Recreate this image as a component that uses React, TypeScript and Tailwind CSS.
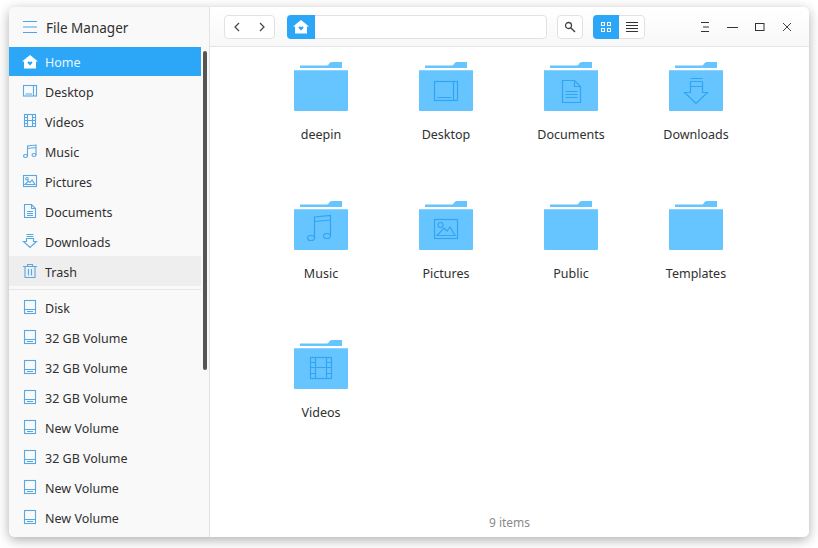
import React from "react";

const FONT = "font-['Noto_Sans','Open_Sans',sans-serif]";

type IconName = "home" | "desktop" | "videos" | "music" | "pictures" | "documents" | "downloads" | "trash" | "disk";

function Glyph({ name, color }: { name: IconName; color: string }) {
  const s = { fill: "none", stroke: color, strokeWidth: 1.1 };
  switch (name) {
    case "home":
      return (
        <>
          <path d="M8 1 L16 7.500 L14 7.500 L14 14.500 L2 14.500 L2 7.500 L0 7.500 Z" fill={color} />
          <path d="M8 11.500 L5.600 9 C5.200 7.600 7.200 7 8 8.200 C8.800 7 10.800 7.600 10.400 9 Z" fill="#2ca7f8" />
        </>
      );
    case "desktop":
      return (
        <>
          <rect x="1.500" y="2.500" width="13" height="10.500" {...s} />
          <path d="M11.500 2.500 V13 M3.500 11 H10" {...s} />
        </>
      );
    case "videos":
      return (
        <>
          <rect x="2.500" y="1.500" width="11" height="12" {...s} />
          <path d="M5.500 1.500 V13.500 M10.500 1.500 V13.500 M2.500 4.500 H5.500 M2.500 7.500 H13.500 M2.500 10.500 H5.500 M10.500 4.500 H13.500 M10.500 10.500 H13.500" {...s} />
        </>
      );
    case "music":
      return (
        <>
          <ellipse cx="3.500" cy="13" rx="2" ry="1.500" {...s} />
          <ellipse cx="12" cy="12" rx="2" ry="1.500" {...s} />
          <path d="M5.500 13 V3 L14 2 V12 M5.500 5.500 L14 4.500" {...s} />
        </>
      );
    case "pictures":
      return (
        <>
          <rect x="1.500" y="2.500" width="13" height="11" {...s} />
          <circle cx="5" cy="5.800" r="1.300" {...s} />
          <path d="M3 11.500 L6.500 8 L8 9.500 L10 7 L13 11.500 Z" {...s} />
        </>
      );
    case "documents":
      return (
        <>
          <path d="M2.500 1.500 H9.500 L13.500 5.500 V14.500 H2.500 Z M9.500 1.500 V5.500 H13.500" {...s} />
          <path d="M5 8.500 H11 M5 10.500 H11 M5 12.500 H11" {...s} />
        </>
      );
    case "downloads":
      return <path d="M4.500 1.500 H11.500 M4.500 3.500 H11.500 M4.500 5.500 H11.500 V8.500 H14.500 L8 14.500 L1.500 8.500 H4.500 Z" {...s} />;
    case "trash":
      return <path d="M1 3.500 H15 M5.500 3.500 V1.500 H10.500 V3.500 M3 3.500 V14.500 H13 V3.500 M6.500 6 V12.500 M9.500 6 V12.500" {...s} />;
    case "disk":
      return (
        <>
          <rect x="2.500" y="1.500" width="11" height="13" {...s} />
          <path d="M2.500 10.500 H13.500 M5 12.500 H11" {...s} />
        </>
      );
  }
}

function SideIcon({ name, color = "#58a9e3" }: { name: IconName; color?: string }) {
  return (
    <svg width="16" height="16" viewBox="0 0 16 16" className="shrink-0">
      <Glyph name={name} color={color} />
    </svg>
  );
}

function SideRow({ icon, label, tone = "plain" }: { icon: IconName; label: string; tone?: "plain" | "active" | "hover" }) {
  const toneClass =
    tone === "active"
      ? "h-[29px] bg-[#2ca7f8] text-[#e8f5ff]"
      : tone === "hover"
        ? "h-[30px] bg-[#eeeeee] text-[#303030]"
        : "h-[30px] text-[#303030]";
  return (
    <div className={`flex w-[192px] shrink-0 items-center gap-[7px] pl-[13px] text-[12.5px] ${toneClass}`}>
      <SideIcon name={icon} color={tone === "active" ? "#ffffff" : "#58a9e3"} />
      <span className="pt-[4px]">{label}</span>
    </div>
  );
}

function FolderArt({ kind }: { kind?: string }) {
  const c = "#32a4f4";
  const s = { fill: "none", stroke: c, strokeWidth: 1.2 };
  return (
    <svg width="54" height="49" viewBox="0 0 54 49" className="block">
      <path d="M6 6 V3.500 H33 C35 3.500 35 0 38 0 H48 V6 Z" fill="#66c4fe" />
      <rect x="0" y="8" width="54" height="41" rx="1" fill="#66c4fe" />
      <path d="M0 8.500 H54" stroke="#8ad2ff" strokeWidth="1" />
      {kind === "Desktop" && (
        <g {...s}>
          <rect x="15.500" y="19.500" width="23" height="19" />
          <path d="M34.500 19.500 V38.500 M18 35.500 H32" />
        </g>
      )}
      {kind === "Documents" && (
        <g {...s}>
          <path d="M18.500 18.500 H30.500 L36.500 24.500 V40.500 H18.500 Z M30.500 18.500 V24.500 H36.500" />
          <path d="M21.500 29.500 H33.500 M21.500 32.500 H33.500 M21.500 35.500 H33.500" />
        </g>
      )}
      {kind === "Downloads" && (
        <g {...s}>
          <path d="M21.500 16.500 H33.500 M21.500 19.500 H33.500 M21.500 24.500 H33.500 V19.500 M21.500 19.500 V30.500 H15.500 L27 41.500 L38.500 30.500 H33.500 V24.500" />
        </g>
      )}
      {kind === "Music" && (
        <g {...s}>
          <ellipse cx="17" cy="37" rx="3.500" ry="2.500" />
          <ellipse cx="33" cy="35" rx="3.500" ry="2.500" />
          <path d="M20.500 37 V16 L36.500 14.500 V35 M20.500 20.500 L36.500 19" />
        </g>
      )}
      {kind === "Pictures" && (
        <g {...s}>
          <rect x="15.500" y="18.500" width="23" height="19" />
          <circle cx="21.500" cy="24" r="2.500" />
          <path d="M18 34.500 L25 27 L28 30 L31 26 L36 34.500 Z" />
        </g>
      )}
      {kind === "Videos" && (
        <g {...s}>
          <rect x="16.500" y="17.500" width="21" height="21" />
          <path d="M21.500 17.500 V38.500 M32.500 17.500 V38.500 M16.500 22.500 H21.500 M16.500 27.500 H37.500 M16.500 33.500 H21.500 M32.500 22.500 H37.500 M32.500 33.500 H37.500" />
        </g>
      )}
    </svg>
  );
}

function FolderItem({ name }: { name: string }) {
  return (
    <div className="flex h-[139px] w-[125px] flex-col items-center pt-[15px]">
      <FolderArt kind={name} />
      <div className="mt-[15px] pl-px text-[12.5px] leading-[18px] text-[#303030]">{name}</div>
    </div>
  );
}

const places: [IconName, string][] = [
  ["desktop", "Desktop"],
  ["videos", "Videos"],
  ["music", "Music"],
  ["pictures", "Pictures"],
  ["documents", "Documents"],
  ["downloads", "Downloads"],
];
const disks = ["Disk", "32 GB Volume", "32 GB Volume", "32 GB Volume", "New Volume", "32 GB Volume", "New Volume", "New Volume"];
const folders = ["deepin", "Desktop", "Documents", "Downloads", "Music", "Pictures", "Public", "Templates", "Videos"];

export default function App() {
  return (
    <div className={`h-[548px] w-[818px] overflow-hidden bg-white pl-[9px] pt-[7px] ${FONT}`}>
      <div className="flex h-[530px] w-[800px] overflow-hidden rounded-[6px] bg-white shadow-[0_3px_12px_rgba(0,0,0,0.32)]">
        <aside className="relative flex w-[201px] shrink-0 flex-col border-r border-[#e4e4e4] bg-[#f9f9f9]">
          <div className="flex h-[40px] shrink-0 items-center gap-[9px] pl-[14px] text-[13.5px] text-[#303030]">
            <svg width="14" height="12" viewBox="0 0 14 12">
              <path d="M0 .5 H14 M0 6 H14 M0 11.500 H14" stroke="#4ea6e6" strokeWidth="1" fill="none" />
            </svg>
            <span className="pt-[2px]">File Manager</span>
          </div>
          <SideRow icon="home" label="Home" tone="active" />
          {places.map(([i, l]) => (
            <SideRow key={l} icon={i} label={l} />
          ))}
          <SideRow icon="trash" label="Trash" tone="hover" />
          <div className="mb-[2px] mt-[3px] h-px w-[192px] shrink-0 bg-[#e6e6e6]" />
          {disks.map((d, i) => (
            <SideRow key={i} icon="disk" label={d} />
          ))}
          <div className="absolute left-[194px] top-[44px] h-[319px] w-[4px] rounded-[2px] bg-[#555555]" />
        </aside>
        <main className="flex min-w-0 flex-1 flex-col">
          <header className="flex h-[40px] shrink-0 items-center border-b border-[#e4e4e4] bg-gradient-to-b from-white to-[#f8f8f8] pl-[14px]">
            <div className="flex h-[24px] w-[51px] items-center justify-between rounded-[4px] border border-[#e2e2e2] bg-white px-[7px]">
              <svg width="10" height="10" viewBox="0 0 10 10"><path d="M7 1 L3 5 L7 9" stroke="#444" strokeWidth="1.200" fill="none" /></svg>
              <svg width="10" height="10" viewBox="0 0 10 10"><path d="M3 1 L7 5 L3 9" stroke="#444" strokeWidth="1.200" fill="none" /></svg>
            </div>
            <div className="ml-[12px] flex h-[24px] w-[260px] overflow-hidden rounded-[4px] bg-white">
              <div className="flex h-full w-[28px] shrink-0 items-center justify-center bg-[#2ca7f8]">
                <svg width="16" height="16" viewBox="0 0 16 16"><Glyph name="home" color="#ffffff" /></svg>
              </div>
              <div className="flex-1 rounded-r-[4px] border-y border-r border-[#e2e2e2]" />
            </div>
            <div className="ml-[10px] flex h-[24px] w-[26px] items-center justify-center rounded-[4px] border border-[#e2e2e2] bg-white">
              <svg width="12" height="12" viewBox="0 0 12 12">
                <circle cx="4.500" cy="4.500" r="3" stroke="#444" strokeWidth="1.300" fill="none" />
                <path d="M7 7 L11 11" stroke="#444" strokeWidth="1.500" />
              </svg>
            </div>
            <div className="ml-[10px] flex h-[24px] w-[52px] overflow-hidden rounded-[4px] bg-white">
              <div className="flex h-full w-[26px] shrink-0 items-center justify-center bg-[#2ca7f8]">
                <svg width="10" height="10" viewBox="0 0 10 10" fill="none" stroke="#fff" strokeWidth="1">
                  <rect x=".5" y=".5" width="3" height="3" />
                  <rect x="6.500" y=".5" width="3" height="3" />
                  <rect x=".5" y="6.500" width="3" height="3" />
                  <rect x="6.500" y="6.500" width="3" height="3" />
                </svg>
              </div>
              <div className="flex flex-1 items-center justify-center rounded-r-[4px] border-y border-r border-[#e2e2e2]">
                <svg width="12" height="10" viewBox="0 0 12 10"><path d="M0 .5 H12 M0 3.500 H12 M0 6.500 H12 M0 9.500 H12" stroke="#333" strokeWidth="1" /></svg>
              </div>
            </div>
            <div className="ml-[55px] flex items-center gap-[17px]">
              <svg width="10" height="10" viewBox="0 0 10 10"><path d="M1 .5 H9 M3 5 H9 M1 9.500 H9" stroke="#333" strokeWidth="1" /></svg>
              <svg width="11" height="10" viewBox="0 0 11 10"><path d="M0 5.500 H11" stroke="#333" strokeWidth="1" /></svg>
              <svg width="10" height="10" viewBox="0 0 10 10"><rect x=".5" y="1.500" width="8.500" height="7" stroke="#333" strokeWidth="1" fill="none" /></svg>
              <svg width="10" height="10" viewBox="0 0 10 10"><path d="M1 1 L9 9 M9 1 L1 9" stroke="#444" strokeWidth="1" /></svg>
            </div>
          </header>
          <div className="flex min-h-0 flex-1 flex-col bg-white">
            <div className="grid flex-1 grid-cols-[repeat(4,125px)] content-start pl-[48px]">
              {folders.map((f) => (
                <FolderItem key={f} name={f} />
              ))}
            </div>
            <div className="flex h-[30px] items-center justify-center pt-[1px] text-[12px] text-[#8a8a8a]">9 items</div>
          </div>
        </main>
      </div>
    </div>
  );
}
